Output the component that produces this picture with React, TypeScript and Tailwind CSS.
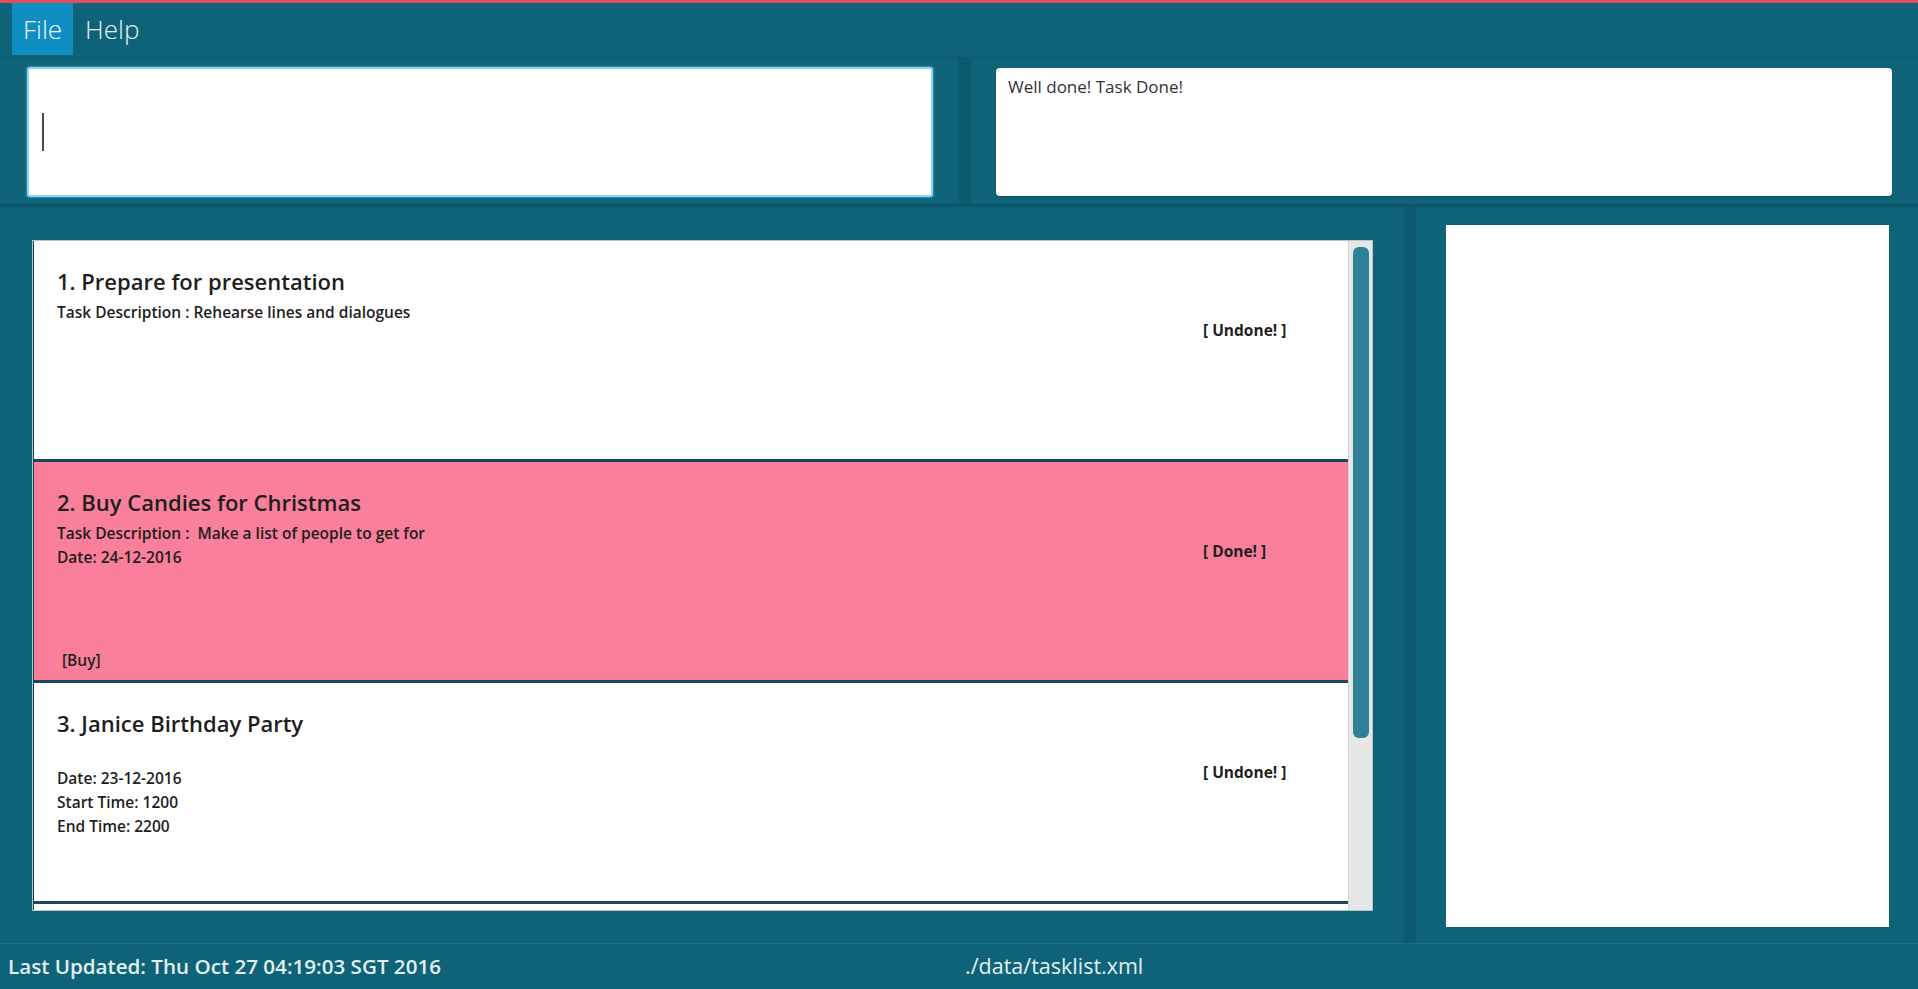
type Task = {
  id: number
  title: string
  description: string
  lines: string[]
  tags: string[]
  done: boolean
}

const tasks: Task[] = [
  { id: 1, title: 'Prepare for presentation', description: 'Task Description : Rehearse lines and dialogues', lines: [], tags: [], done: false },
  { id: 2, title: 'Buy Candies for Christmas', description: 'Task Description :  Make a list of people to get for', lines: ['Date: 24-12-2016'], tags: ['Buy'], done: true },
  { id: 3, title: 'Janice Birthday Party', description: '', lines: ['Date: 23-12-2016', 'Start Time: 1200', 'End Time: 2200'], tags: [], done: false },
]

const TaskCard = ({ task }: { task: Task }) => {
  return (
    <div
      className={`h-[221px] shrink-0 flex border-b-[3px] border-l border-[#16495a] text-[#1e1e1e] ${
        task.done ? 'bg-[#f97f9a]' : 'bg-white'
      }`}
    >
      <div className="flex-1 flex flex-col pl-[23px] pt-[24px] pb-[8px]">
        <div className="text-[22px] leading-[32px] font-semibold whitespace-pre">
          {task.id}. {task.title}
        </div>
        <div className="mt-[3px] text-[15.5px] leading-[24px] font-semibold whitespace-pre h-[24px]">
          {task.description}
        </div>
        {task.lines.map((line) => (
          <div key={line} className="text-[15.5px] leading-[24px] font-semibold">
            {line}
          </div>
        ))}
        <div className="mt-auto flex gap-2 pl-[5px] h-[24px]">
          {task.tags.map((tag) => (
            <span key={tag} className="text-[15.5px] leading-[24px] font-semibold">
              [{tag}]
            </span>
          ))}
        </div>
      </div>
      <div className="w-[145px] pt-[78px] text-[15.5px] leading-[22px] font-bold whitespace-pre">
        {task.done ? '[ Done! ]' : '[ Undone! ]'}
      </div>
    </div>
  )
}

const App = () => {
  return (
    <div className="w-[1918px] h-[989px] flex flex-col bg-[#0f6378] overflow-hidden font-['Open_Sans','Noto_Sans',sans-serif]">
      <div className="h-[3px] bg-[#e24f5b]" />

      {/* menu bar */}
      <div className="h-[55px] flex items-stretch pl-[12px] pb-[2px] border-b border-[#0b586c]">
        <div className="px-[11px] flex items-center bg-[#0f8ec4] text-[26px] font-light text-[#eef8fb]">File</div>
        <div className="px-[12px] flex items-center text-[26px] font-light text-[#e6f3f7]">Help</div>
      </div>

      {/* command + result */}
      <div className="h-[149px] flex border-b-[3px] border-[#0c566a]">
        <div className="w-[958px] pl-[27px] pr-[25px] pt-[9px] pb-[7px]">
          <div className="h-full bg-white rounded-[3px] border-2 border-[#8ad7f2] shadow-[0_0_3px_#5cc6ee] flex items-center pl-[13px]">
            <span className="w-[2px] h-[38px] bg-[#4a4a4a]" />
          </div>
        </div>
        <div className="w-[14px] bg-[#0b5a6e] border-x border-[#0d6075]" />
        <div className="flex-1 pl-[24px] pr-[26px] pt-[10px] pb-[8px]">
          <div className="h-full bg-white rounded-[4px] shadow-[0_1px_2px_rgba(0,0,0,0.25)] pl-[12px] pt-[7px] text-[17px] leading-[24px] text-[#333]">
            Well done! Task Done!
          </div>
        </div>
      </div>

      {/* main */}
      <div className="flex-1 flex min-h-0">
        <div className="w-[1404px] pl-[32px] pr-[31px] pt-[33px] pb-[32px]">
          <div className="h-full flex border border-[#b3c6cc] bg-white">
            <div className="flex-1 flex flex-col overflow-hidden">
              {tasks.map((task) => (
                <TaskCard key={task.id} task={task} />
              ))}
              <div className="h-[221px] shrink-0 bg-white border-l border-[#16495a]" />
            </div>
            <div className="w-[24px] bg-[#e7e7e7] border-l border-[#d6d6d6] pl-[4px] pr-[3px] pt-[6px]">
              <div className="h-[491px] rounded-[6px] bg-[#2e8196]" />
            </div>
          </div>
        </div>
        <div className="w-[12px] bg-[#0b5a6e]" />
        <div className="flex-1 pl-[30px] pr-[29px] pt-[18px] pb-[16px]">
          <div className="h-full bg-white" />
        </div>
      </div>

      {/* status bar */}
      <div className="h-[46px] shrink-0 grid grid-cols-2 items-center border-t border-[#1a6d82] text-[#e2f0f4]">
        <div className="pl-[8px] text-[20.6px] font-semibold">Last Updated: Thu Oct 27 04:19:03 SGT 2016</div>
        <div className="pl-[6px] text-[21.5px]">./data/tasklist.xml</div>
      </div>
    </div>
  )
}

export default App
